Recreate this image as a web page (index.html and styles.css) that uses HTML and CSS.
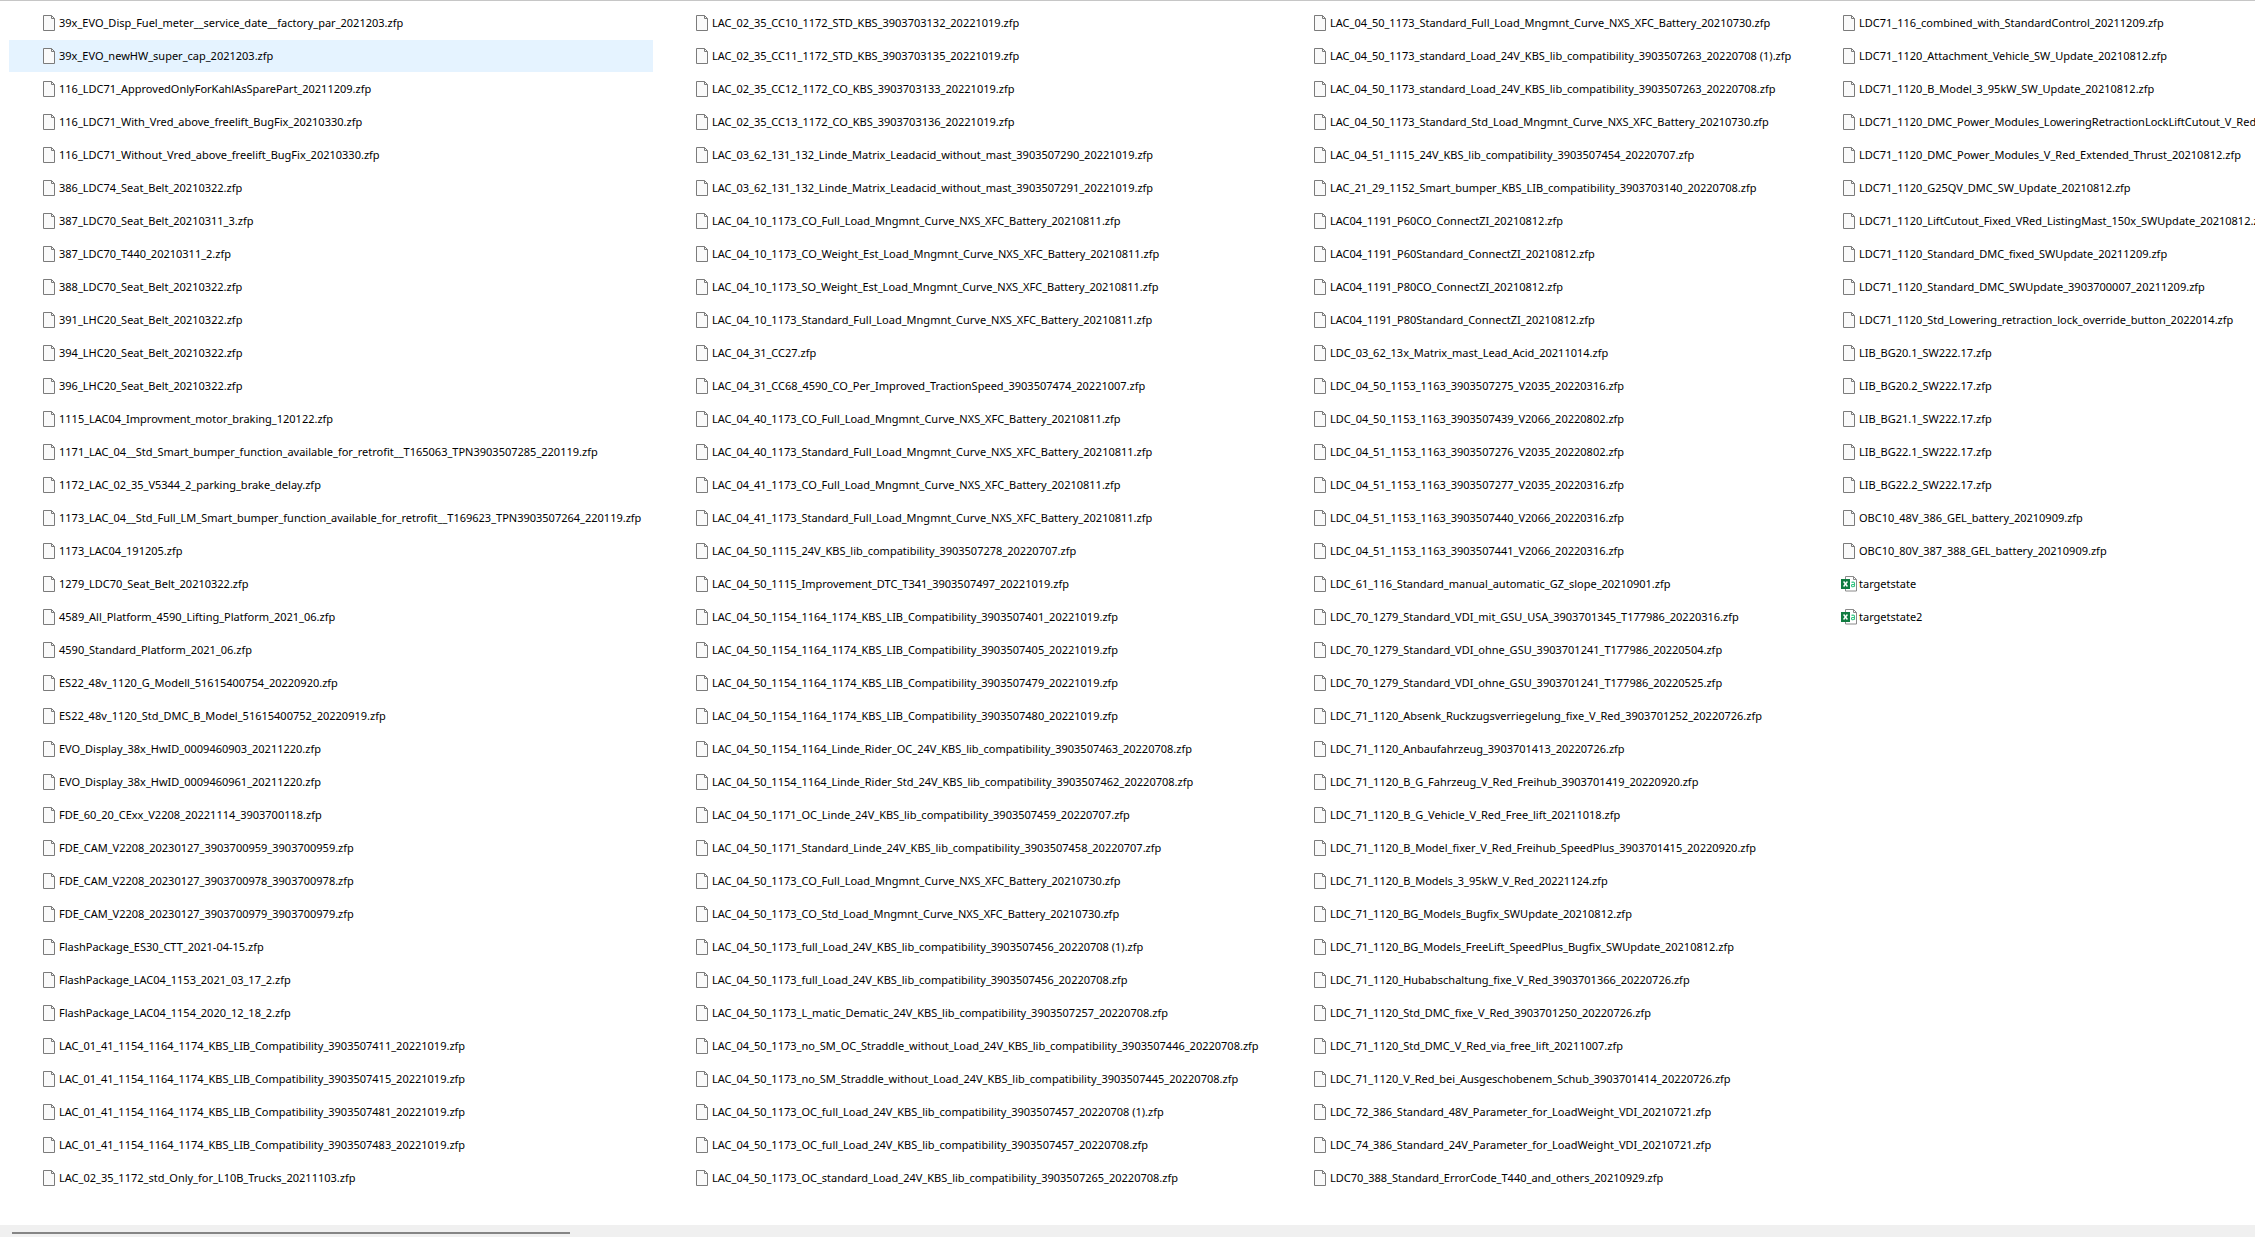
FILE: index.html
```html
<!DOCTYPE html>
<html lang="en">
<head>
<meta charset="utf-8">
<title>Files</title>
<link rel="stylesheet" href="styles.css">
</head>
<body>
<svg class="sprite" aria-hidden="true">
  <symbol id="file" viewBox="0 0 16 16">
    <path d="M2.500 .5h8l3 3v12h-11z" fill="#fafafa" stroke="#7b7b7b"/>
    <path d="M10.500 .5v3h3" fill="none" stroke="#7b7b7b"/>
  </symbol>
  <symbol id="csv" viewBox="0 0 16 16">
    <path d="M4.500 .5h8l3 3v11.500h-11z" fill="#fff" stroke="#8a8a8a"/>
    <path d="M12.500 .5v3h3" fill="none" stroke="#8a8a8a"/>
    <path d="M0 3h9v10H0z" fill="#107c41"/>
    <path d="M2.600 5.500l3.800 5M6.400 5.500l-3.800 5" fill="none" stroke="#fff" stroke-width="1.400"/>
    <path d="M10.500 6.400q3-.9 3 1v3.300M13.500 8.300q-3-.1-3 1.300 0 1.300 1.500 1.100 1.300-.2 1.500-1.400" fill="none" stroke="#33c481" stroke-width="1.100"/>
  </symbol>
</svg>
<main class="list">
<ul class="column">
<li><svg><use href="#file"/></svg>39x_EVO_Disp_Fuel_meter__service_date__factory_par_2021203.zfp</li>
<li class="active"><svg><use href="#file"/></svg>39x_EVO_newHW_super_cap_2021203.zfp</li>
<li><svg><use href="#file"/></svg>116_LDC71_ApprovedOnlyForKahlAsSparePart_20211209.zfp</li>
<li><svg><use href="#file"/></svg>116_LDC71_With_Vred_above_freelift_BugFix_20210330.zfp</li>
<li><svg><use href="#file"/></svg>116_LDC71_Without_Vred_above_freelift_BugFix_20210330.zfp</li>
<li><svg><use href="#file"/></svg>386_LDC74_Seat_Belt_20210322.zfp</li>
<li><svg><use href="#file"/></svg>387_LDC70_Seat_Belt_20210311_3.zfp</li>
<li><svg><use href="#file"/></svg>387_LDC70_T440_20210311_2.zfp</li>
<li><svg><use href="#file"/></svg>388_LDC70_Seat_Belt_20210322.zfp</li>
<li><svg><use href="#file"/></svg>391_LHC20_Seat_Belt_20210322.zfp</li>
<li><svg><use href="#file"/></svg>394_LHC20_Seat_Belt_20210322.zfp</li>
<li><svg><use href="#file"/></svg>396_LHC20_Seat_Belt_20210322.zfp</li>
<li><svg><use href="#file"/></svg>1115_LAC04_Improvment_motor_braking_120122.zfp</li>
<li><svg><use href="#file"/></svg>1171_LAC_04__Std_Smart_bumper_function_available_for_retrofit__T165063_TPN3903507285_220119.zfp</li>
<li><svg><use href="#file"/></svg>1172_LAC_02_35_V5344_2_parking_brake_delay.zfp</li>
<li><svg><use href="#file"/></svg>1173_LAC_04__Std_Full_LM_Smart_bumper_function_available_for_retrofit__T169623_TPN3903507264_220119.zfp</li>
<li><svg><use href="#file"/></svg>1173_LAC04_191205.zfp</li>
<li><svg><use href="#file"/></svg>1279_LDC70_Seat_Belt_20210322.zfp</li>
<li><svg><use href="#file"/></svg>4589_All_Platform_4590_Lifting_Platform_2021_06.zfp</li>
<li><svg><use href="#file"/></svg>4590_Standard_Platform_2021_06.zfp</li>
<li><svg><use href="#file"/></svg>ES22_48v_1120_G_Modell_51615400754_20220920.zfp</li>
<li><svg><use href="#file"/></svg>ES22_48v_1120_Std_DMC_B_Model_51615400752_20220919.zfp</li>
<li><svg><use href="#file"/></svg>EVO_Display_38x_HwID_0009460903_20211220.zfp</li>
<li><svg><use href="#file"/></svg>EVO_Display_38x_HwID_0009460961_20211220.zfp</li>
<li><svg><use href="#file"/></svg>FDE_60_20_CExx_V2208_20221114_3903700118.zfp</li>
<li><svg><use href="#file"/></svg>FDE_CAM_V2208_20230127_3903700959_3903700959.zfp</li>
<li><svg><use href="#file"/></svg>FDE_CAM_V2208_20230127_3903700978_3903700978.zfp</li>
<li><svg><use href="#file"/></svg>FDE_CAM_V2208_20230127_3903700979_3903700979.zfp</li>
<li><svg><use href="#file"/></svg>FlashPackage_ES30_CTT_2021-04-15.zfp</li>
<li><svg><use href="#file"/></svg>FlashPackage_LAC04_1153_2021_03_17_2.zfp</li>
<li><svg><use href="#file"/></svg>FlashPackage_LAC04_1154_2020_12_18_2.zfp</li>
<li><svg><use href="#file"/></svg>LAC_01_41_1154_1164_1174_KBS_LIB_Compatibility_3903507411_20221019.zfp</li>
<li><svg><use href="#file"/></svg>LAC_01_41_1154_1164_1174_KBS_LIB_Compatibility_3903507415_20221019.zfp</li>
<li><svg><use href="#file"/></svg>LAC_01_41_1154_1164_1174_KBS_LIB_Compatibility_3903507481_20221019.zfp</li>
<li><svg><use href="#file"/></svg>LAC_01_41_1154_1164_1174_KBS_LIB_Compatibility_3903507483_20221019.zfp</li>
<li><svg><use href="#file"/></svg>LAC_02_35_1172_std_Only_for_L10B_Trucks_20211103.zfp</li>
</ul>
<ul class="column">
<li><svg><use href="#file"/></svg>LAC_02_35_CC10_1172_STD_KBS_3903703132_20221019.zfp</li>
<li><svg><use href="#file"/></svg>LAC_02_35_CC11_1172_STD_KBS_3903703135_20221019.zfp</li>
<li><svg><use href="#file"/></svg>LAC_02_35_CC12_1172_CO_KBS_3903703133_20221019.zfp</li>
<li><svg><use href="#file"/></svg>LAC_02_35_CC13_1172_CO_KBS_3903703136_20221019.zfp</li>
<li><svg><use href="#file"/></svg>LAC_03_62_131_132_Linde_Matrix_Leadacid_without_mast_3903507290_20221019.zfp</li>
<li><svg><use href="#file"/></svg>LAC_03_62_131_132_Linde_Matrix_Leadacid_without_mast_3903507291_20221019.zfp</li>
<li><svg><use href="#file"/></svg>LAC_04_10_1173_CO_Full_Load_Mngmnt_Curve_NXS_XFC_Battery_20210811.zfp</li>
<li><svg><use href="#file"/></svg>LAC_04_10_1173_CO_Weight_Est_Load_Mngmnt_Curve_NXS_XFC_Battery_20210811.zfp</li>
<li><svg><use href="#file"/></svg>LAC_04_10_1173_SO_Weight_Est_Load_Mngmnt_Curve_NXS_XFC_Battery_20210811.zfp</li>
<li><svg><use href="#file"/></svg>LAC_04_10_1173_Standard_Full_Load_Mngmnt_Curve_NXS_XFC_Battery_20210811.zfp</li>
<li><svg><use href="#file"/></svg>LAC_04_31_CC27.zfp</li>
<li><svg><use href="#file"/></svg>LAC_04_31_CC68_4590_CO_Per_Improved_TractionSpeed_3903507474_20221007.zfp</li>
<li><svg><use href="#file"/></svg>LAC_04_40_1173_CO_Full_Load_Mngmnt_Curve_NXS_XFC_Battery_20210811.zfp</li>
<li><svg><use href="#file"/></svg>LAC_04_40_1173_Standard_Full_Load_Mngmnt_Curve_NXS_XFC_Battery_20210811.zfp</li>
<li><svg><use href="#file"/></svg>LAC_04_41_1173_CO_Full_Load_Mngmnt_Curve_NXS_XFC_Battery_20210811.zfp</li>
<li><svg><use href="#file"/></svg>LAC_04_41_1173_Standard_Full_Load_Mngmnt_Curve_NXS_XFC_Battery_20210811.zfp</li>
<li><svg><use href="#file"/></svg>LAC_04_50_1115_24V_KBS_lib_compatibility_3903507278_20220707.zfp</li>
<li><svg><use href="#file"/></svg>LAC_04_50_1115_Improvement_DTC_T341_3903507497_20221019.zfp</li>
<li><svg><use href="#file"/></svg>LAC_04_50_1154_1164_1174_KBS_LIB_Compatibility_3903507401_20221019.zfp</li>
<li><svg><use href="#file"/></svg>LAC_04_50_1154_1164_1174_KBS_LIB_Compatibility_3903507405_20221019.zfp</li>
<li><svg><use href="#file"/></svg>LAC_04_50_1154_1164_1174_KBS_LIB_Compatibility_3903507479_20221019.zfp</li>
<li><svg><use href="#file"/></svg>LAC_04_50_1154_1164_1174_KBS_LIB_Compatibility_3903507480_20221019.zfp</li>
<li><svg><use href="#file"/></svg>LAC_04_50_1154_1164_Linde_Rider_OC_24V_KBS_lib_compatibility_3903507463_20220708.zfp</li>
<li><svg><use href="#file"/></svg>LAC_04_50_1154_1164_Linde_Rider_Std_24V_KBS_lib_compatibility_3903507462_20220708.zfp</li>
<li><svg><use href="#file"/></svg>LAC_04_50_1171_OC_Linde_24V_KBS_lib_compatibility_3903507459_20220707.zfp</li>
<li><svg><use href="#file"/></svg>LAC_04_50_1171_Standard_Linde_24V_KBS_lib_compatibility_3903507458_20220707.zfp</li>
<li><svg><use href="#file"/></svg>LAC_04_50_1173_CO_Full_Load_Mngmnt_Curve_NXS_XFC_Battery_20210730.zfp</li>
<li><svg><use href="#file"/></svg>LAC_04_50_1173_CO_Std_Load_Mngmnt_Curve_NXS_XFC_Battery_20210730.zfp</li>
<li><svg><use href="#file"/></svg>LAC_04_50_1173_full_Load_24V_KBS_lib_compatibility_3903507456_20220708 (1).zfp</li>
<li><svg><use href="#file"/></svg>LAC_04_50_1173_full_Load_24V_KBS_lib_compatibility_3903507456_20220708.zfp</li>
<li><svg><use href="#file"/></svg>LAC_04_50_1173_L_matic_Dematic_24V_KBS_lib_compatibility_3903507257_20220708.zfp</li>
<li><svg><use href="#file"/></svg>LAC_04_50_1173_no_SM_OC_Straddle_without_Load_24V_KBS_lib_compatibility_3903507446_20220708.zfp</li>
<li><svg><use href="#file"/></svg>LAC_04_50_1173_no_SM_Straddle_without_Load_24V_KBS_lib_compatibility_3903507445_20220708.zfp</li>
<li><svg><use href="#file"/></svg>LAC_04_50_1173_OC_full_Load_24V_KBS_lib_compatibility_3903507457_20220708 (1).zfp</li>
<li><svg><use href="#file"/></svg>LAC_04_50_1173_OC_full_Load_24V_KBS_lib_compatibility_3903507457_20220708.zfp</li>
<li><svg><use href="#file"/></svg>LAC_04_50_1173_OC_standard_Load_24V_KBS_lib_compatibility_3903507265_20220708.zfp</li>
</ul>
<ul class="column">
<li><svg><use href="#file"/></svg>LAC_04_50_1173_Standard_Full_Load_Mngmnt_Curve_NXS_XFC_Battery_20210730.zfp</li>
<li><svg><use href="#file"/></svg>LAC_04_50_1173_standard_Load_24V_KBS_lib_compatibility_3903507263_20220708 (1).zfp</li>
<li><svg><use href="#file"/></svg>LAC_04_50_1173_standard_Load_24V_KBS_lib_compatibility_3903507263_20220708.zfp</li>
<li><svg><use href="#file"/></svg>LAC_04_50_1173_Standard_Std_Load_Mngmnt_Curve_NXS_XFC_Battery_20210730.zfp</li>
<li><svg><use href="#file"/></svg>LAC_04_51_1115_24V_KBS_lib_compatibility_3903507454_20220707.zfp</li>
<li><svg><use href="#file"/></svg>LAC_21_29_1152_Smart_bumper_KBS_LIB_compatibility_3903703140_20220708.zfp</li>
<li><svg><use href="#file"/></svg>LAC04_1191_P60CO_ConnectZI_20210812.zfp</li>
<li><svg><use href="#file"/></svg>LAC04_1191_P60Standard_ConnectZI_20210812.zfp</li>
<li><svg><use href="#file"/></svg>LAC04_1191_P80CO_ConnectZI_20210812.zfp</li>
<li><svg><use href="#file"/></svg>LAC04_1191_P80Standard_ConnectZI_20210812.zfp</li>
<li><svg><use href="#file"/></svg>LDC_03_62_13x_Matrix_mast_Lead_Acid_20211014.zfp</li>
<li><svg><use href="#file"/></svg>LDC_04_50_1153_1163_3903507275_V2035_20220316.zfp</li>
<li><svg><use href="#file"/></svg>LDC_04_50_1153_1163_3903507439_V2066_20220802.zfp</li>
<li><svg><use href="#file"/></svg>LDC_04_51_1153_1163_3903507276_V2035_20220802.zfp</li>
<li><svg><use href="#file"/></svg>LDC_04_51_1153_1163_3903507277_V2035_20220316.zfp</li>
<li><svg><use href="#file"/></svg>LDC_04_51_1153_1163_3903507440_V2066_20220316.zfp</li>
<li><svg><use href="#file"/></svg>LDC_04_51_1153_1163_3903507441_V2066_20220316.zfp</li>
<li><svg><use href="#file"/></svg>LDC_61_116_Standard_manual_automatic_GZ_slope_20210901.zfp</li>
<li><svg><use href="#file"/></svg>LDC_70_1279_Standard_VDI_mit_GSU_USA_3903701345_T177986_20220316.zfp</li>
<li><svg><use href="#file"/></svg>LDC_70_1279_Standard_VDI_ohne_GSU_3903701241_T177986_20220504.zfp</li>
<li><svg><use href="#file"/></svg>LDC_70_1279_Standard_VDI_ohne_GSU_3903701241_T177986_20220525.zfp</li>
<li><svg><use href="#file"/></svg>LDC_71_1120_Absenk_Ruckzugsverriegelung_fixe_V_Red_3903701252_20220726.zfp</li>
<li><svg><use href="#file"/></svg>LDC_71_1120_Anbaufahrzeug_3903701413_20220726.zfp</li>
<li><svg><use href="#file"/></svg>LDC_71_1120_B_G_Fahrzeug_V_Red_Freihub_3903701419_20220920.zfp</li>
<li><svg><use href="#file"/></svg>LDC_71_1120_B_G_Vehicle_V_Red_Free_lift_20211018.zfp</li>
<li><svg><use href="#file"/></svg>LDC_71_1120_B_Model_fixer_V_Red_Freihub_SpeedPlus_3903701415_20220920.zfp</li>
<li><svg><use href="#file"/></svg>LDC_71_1120_B_Models_3_95kW_V_Red_20221124.zfp</li>
<li><svg><use href="#file"/></svg>LDC_71_1120_BG_Models_Bugfix_SWUpdate_20210812.zfp</li>
<li><svg><use href="#file"/></svg>LDC_71_1120_BG_Models_FreeLift_SpeedPlus_Bugfix_SWUpdate_20210812.zfp</li>
<li><svg><use href="#file"/></svg>LDC_71_1120_Hubabschaltung_fixe_V_Red_3903701366_20220726.zfp</li>
<li><svg><use href="#file"/></svg>LDC_71_1120_Std_DMC_fixe_V_Red_3903701250_20220726.zfp</li>
<li><svg><use href="#file"/></svg>LDC_71_1120_Std_DMC_V_Red_via_free_lift_20211007.zfp</li>
<li><svg><use href="#file"/></svg>LDC_71_1120_V_Red_bei_Ausgeschobenem_Schub_3903701414_20220726.zfp</li>
<li><svg><use href="#file"/></svg>LDC_72_386_Standard_48V_Parameter_for_LoadWeight_VDI_20210721.zfp</li>
<li><svg><use href="#file"/></svg>LDC_74_386_Standard_24V_Parameter_for_LoadWeight_VDI_20210721.zfp</li>
<li><svg><use href="#file"/></svg>LDC70_388_Standard_ErrorCode_T440_and_others_20210929.zfp</li>
</ul>
<ul class="column">
<li><svg><use href="#file"/></svg>LDC71_116_combined_with_StandardControl_20211209.zfp</li>
<li><svg><use href="#file"/></svg>LDC71_1120_Attachment_Vehicle_SW_Update_20210812.zfp</li>
<li><svg><use href="#file"/></svg>LDC71_1120_B_Model_3_95kW_SW_Update_20210812.zfp</li>
<li><svg><use href="#file"/></svg>LDC71_1120_DMC_Power_Modules_LoweringRetractionLockLiftCutout_V_Red</li>
<li><svg><use href="#file"/></svg>LDC71_1120_DMC_Power_Modules_V_Red_Extended_Thrust_20210812.zfp</li>
<li><svg><use href="#file"/></svg>LDC71_1120_G25QV_DMC_SW_Update_20210812.zfp</li>
<li><svg><use href="#file"/></svg>LDC71_1120_LiftCutout_Fixed_VRed_ListingMast_150x_SWUpdate_20210812.zfp</li>
<li><svg><use href="#file"/></svg>LDC71_1120_Standard_DMC_fixed_SWUpdate_20211209.zfp</li>
<li><svg><use href="#file"/></svg>LDC71_1120_Standard_DMC_SWUpdate_3903700007_20211209.zfp</li>
<li><svg><use href="#file"/></svg>LDC71_1120_Std_Lowering_retraction_lock_override_button_2022014.zfp</li>
<li><svg><use href="#file"/></svg>LIB_BG20.1_SW222.17.zfp</li>
<li><svg><use href="#file"/></svg>LIB_BG20.2_SW222.17.zfp</li>
<li><svg><use href="#file"/></svg>LIB_BG21.1_SW222.17.zfp</li>
<li><svg><use href="#file"/></svg>LIB_BG22.1_SW222.17.zfp</li>
<li><svg><use href="#file"/></svg>LIB_BG22.2_SW222.17.zfp</li>
<li><svg><use href="#file"/></svg>OBC10_48V_386_GEL_battery_20210909.zfp</li>
<li><svg><use href="#file"/></svg>OBC10_80V_387_388_GEL_battery_20210909.zfp</li>
<li><svg><use href="#csv"/></svg>targetstate</li>
<li><svg><use href="#csv"/></svg>targetstate2</li>
</ul>
</main>
<footer class="scrollbar"><div class="thumb"></div></footer>
</body>
</html>
```
FILE: styles.css
```css
* {
  box-sizing: border-box;
}

body {
  display: flex;
  flex-direction: column;
  min-height: 100vh;
  margin: 0;
  overflow-x: hidden;
  border-top: 1px solid #c6c6c6;
  background: #fff;
  color: #000;
  font: 11px/16px "Noto Sans", "Open Sans", sans-serif;
}

.sprite {
  display: none;
}

.list {
  display: grid;
  flex: 1;
  grid-template-columns: 653fr 618fr 529fr 446fr;
  padding: 6px 0 6px 9px;
  overflow: hidden;
}

.column {
  display: flex;
  flex-direction: column;
  gap: 1px;
  min-width: 0;
  margin: 0;
  padding: 0 9px 0 0;
  list-style: none;
}

.column li {
  display: flex;
  align-items: center;
  gap: 2px;
  height: 32px;
  padding-left: 32px;
  white-space: nowrap;
}

.column .active {
  background: #e5f3ff;
}

.column svg {
  flex: none;
  width: 16px;
  height: 16px;
}

.scrollbar {
  padding: 7px 12px 3px;
  background: #f0f0f0;
}

.thumb {
  width: 25%;
  height: 2px;
  background: #858585;
}
```
